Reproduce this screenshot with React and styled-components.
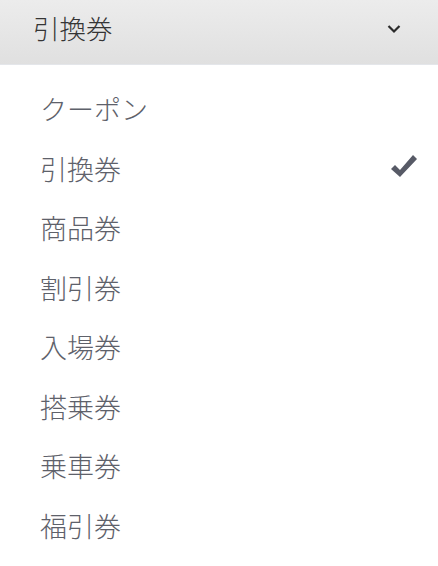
import React from 'react'
import styled, { createGlobalStyle } from 'styled-components';

const items = ['クーポン', '引換券', '商品券', '割引券', '入場券', '搭乗券', '乗車券', '福引券'];
const selected = '引換券';

const Global = createGlobalStyle`
	body {
		margin: 0;
		background: #fff;
		font-family: "Noto Sans CJK JP", "Noto Sans", sans-serif;
	}
`;

const App = () => {
	return (
		<Page>
			<Global />
			<Header>
				<HeaderLabel>{selected}</HeaderLabel>
				<Chevron viewBox="0 0 14 10">
					<path d="M1.5 2 L7 7.5 L12.5 2" fill="none" stroke="#2b2b2b" strokeWidth="2.2" />
				</Chevron>
			</Header>
			<List>
				{items.map((item) => (
					<Item key={item}>
						<ItemLabel>{item}</ItemLabel>
						{item === selected && (
							<Check viewBox="0 0 28 24">
								<path d="M1 15 L5 11 L10 16 L23 1 L27 5 L10 23 Z" fill="#575a66" />
							</Check>
						)}
					</Item>
				))}
			</List>
		</Page>
	)
};

export default App

const Page = styled.div`
	width: 438px;
	height: 566px;
	overflow: hidden;
	background: #fff;
`
const Header = styled.div`
	height: 65px;
	display: flex;
	align-items: center;
	justify-content: space-between;
	padding: 0 37px 10px 33px;
	box-sizing: border-box;
	background: linear-gradient(#ececec, #e0e0e0);
	border-bottom: 1px solid #e4e6ea;
`
const HeaderLabel = styled.span`
	font-size: 26.5px;
	font-weight: 300;
	color: #353535;
`
const Chevron = styled.svg`
	width: 14px;
	height: 10px;
	margin-top: 4px;
`
const List = styled.ul`
	list-style: none;
	margin: 0;
	padding: 16px 0 0;
`
const Item = styled.li`
	height: 59.5px;
	display: flex;
	align-items: center;
	justify-content: space-between;
	padding: 0 20px 4px 40px;
	box-sizing: border-box;
`
const ItemLabel = styled.span`
	font-size: 27px;
	font-weight: 300;
	color: #5e616a;
`
const Check = styled.svg`
	width: 28px;
	height: 24px;
	margin-bottom: 4px;
`
